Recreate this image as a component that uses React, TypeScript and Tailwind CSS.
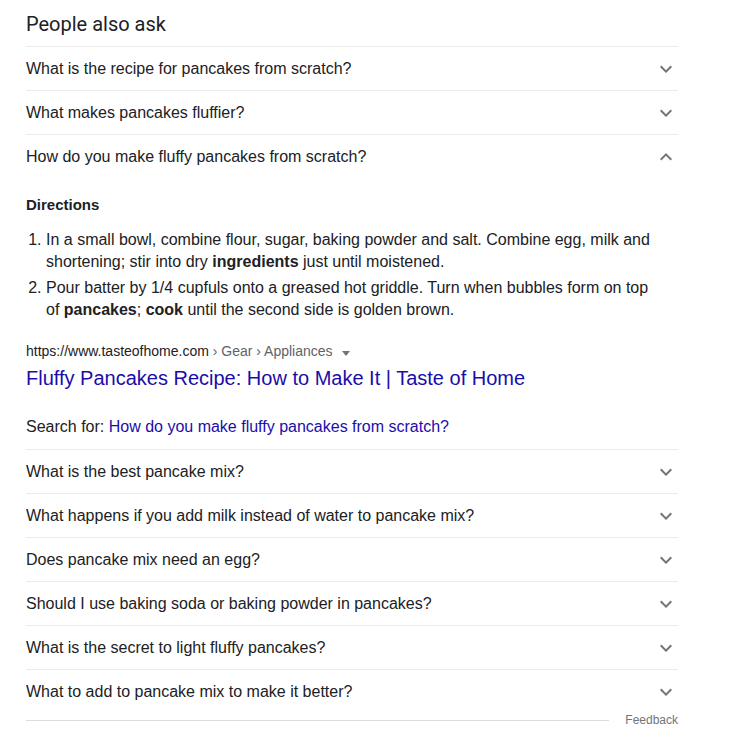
import React from "react";

const topQuestions = [
  "What is the recipe for pancakes from scratch?",
  "What makes pancakes fluffier?",
];

const moreQuestions = [
  "What is the best pancake mix?",
  "What happens if you add milk instead of water to pancake mix?",
  "Does pancake mix need an egg?",
  "Should I use baking soda or baking powder in pancakes?",
  "What is the secret to light fluffy pancakes?",
  "What to add to pancake mix to make it better?",
];

function Chevron({ up = false }: { up?: boolean }) {
  return (
    <svg width="24" height="24" viewBox="0 0 24 24" className={up ? "rotate-180" : ""} fill="#70757a">
      <path d="M16.59 8.59L12 13.17 7.41 8.59 6 10l6 6 6-6z" />
    </svg>
  );
}

function QuestionRow({ text, open = false }: { text: string; open?: boolean }) {
  return (
    <div className="flex h-[44px] items-center justify-between border-t border-[#ebebeb]">
      <span className="text-[16px] leading-[22px] text-[#202124]">{text}</span>
      <Chevron up={open} />
    </div>
  );
}

export default function App() {
  return (
    <div className="min-h-screen bg-white font-['Liberation_Sans',Arial,sans-serif]">
      <div className="ml-[26px] w-[652px]">
        <div className="pt-[11px] pb-[9px] font-['Roboto',sans-serif] text-[20px] leading-[26px] text-[#202124]">
          People also ask
        </div>

        {topQuestions.map((q) => (
          <QuestionRow key={q} text={q} />
        ))}
        <QuestionRow text="How do you make fluffy pancakes from scratch?" open />

        <div className="pt-[17px] pb-[11px]">
          <div className="text-[15px] font-bold leading-[20px] text-[#202124]">Directions</div>
          <ol className="mt-[14px] w-[628px] list-decimal pl-[20px] text-[16px] leading-[22px] text-[#202124]">
            <li className="mb-[4px]">
              In a small bowl, combine flour, sugar, baking powder and salt. Combine egg, milk and shortening; stir
              into dry <b>ingredients</b> just until moistened.
            </li>
            <li>
              Pour batter by 1/4 cupfuls onto a greased hot griddle. Turn when bubbles form on top of{" "}
              <b>pancakes</b>; <b>cook</b> until the second side is golden brown.
            </li>
          </ol>

          <div className="mt-[20px] flex items-center text-[14px] leading-[20px]">
            <span className="text-[#202124]">https://www.tasteofhome.com</span>
            <span className="text-[#5f6368]">&nbsp;› Gear › Appliances</span>
            <span className="ml-[9px] mt-[4px] h-0 w-0 border-x-[4px] border-t-[5px] border-x-transparent border-t-[#70757a]" />
          </div>
          <div className="mt-[4px] text-[20px] leading-[26px] text-[#1a0dab]">
            Fluffy Pancakes Recipe: How to Make It | Taste of Home
          </div>

          <div className="mt-[25px] text-[16px] leading-[22px] text-[#202124]">
            Search for: <span className="text-[#1a0dab]">How do you make fluffy pancakes from scratch?</span>
          </div>
        </div>

        {moreQuestions.map((q) => (
          <QuestionRow key={q} text={q} />
        ))}

        <div className="flex h-[14px] items-center">
          <div className="flex-1 border-t border-[#dadce0]" />
          <span className="ml-[16px] text-[12px] leading-[14px] text-[#70757a]">Feedback</span>
        </div>
      </div>
    </div>
  );
}
